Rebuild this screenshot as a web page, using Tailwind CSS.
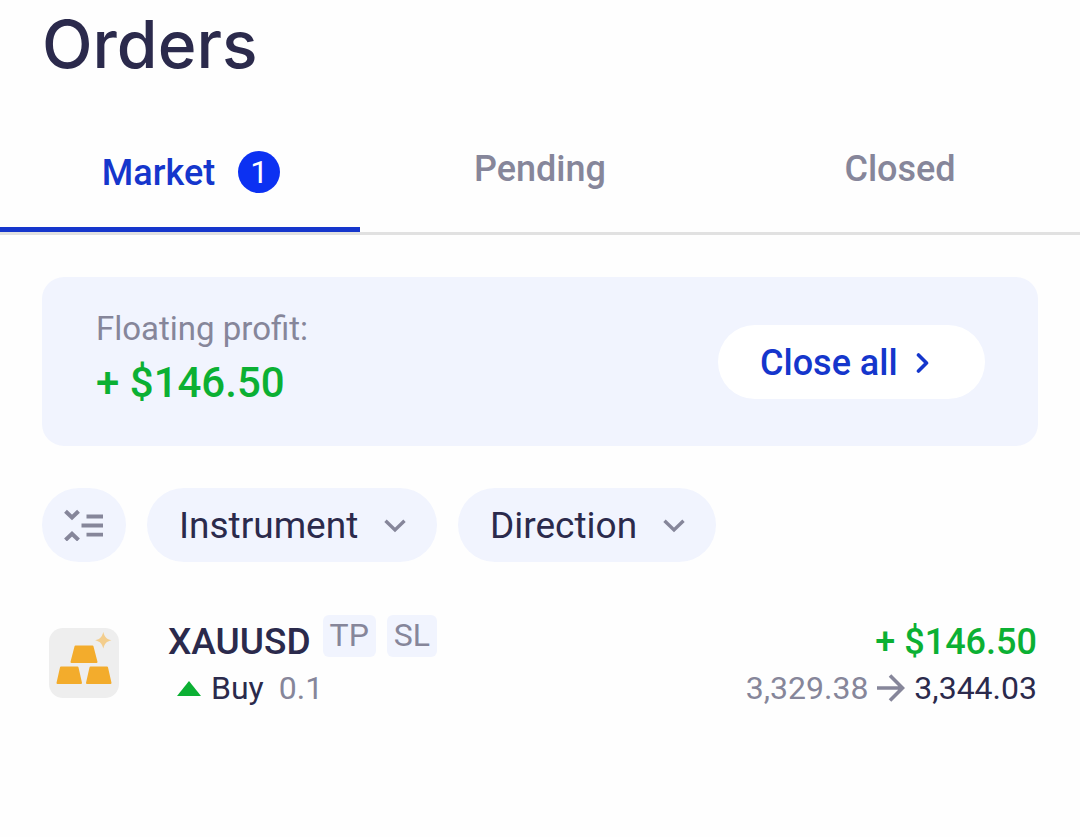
<!DOCTYPE html>
<html lang="en">
<head>
    <meta charset="UTF-8">
    <meta name="viewport" content="width=device-width, initial-scale=1.0">
    <title>Orders</title>
    <script src="https://cdn.jsdelivr.net/npm/@tailwindcss/browser@4"></script>
</head>
<body class="bg-[#fefefe] text-[#2b2a4c] font-['Roboto',sans-serif] min-h-screen">

    <h1 class="px-[42px] font-['Inter',sans-serif] text-[66px] leading-[88px] font-medium">Orders</h1>

    <nav class="mt-[63px] grid grid-cols-3 items-stretch border-b-3 border-[#e1e1e1] text-[36px] font-medium text-[#86869a]">
        <button type="button" class="flex items-center justify-center gap-[23px] border-b-5 border-[#1536cc] pb-[34px] pl-[22px] text-[#1536cc]">
            <span class="pt-[2px] leading-[40px]">Market</span>
            <span class="flex size-[42px] items-center justify-center rounded-full bg-[#0c31f2] text-[32px] leading-[42px] font-normal text-white">1</span>
        </button>
        <button type="button" class="flex items-start justify-center leading-[36px]">Pending</button>
        <button type="button" class="flex items-start justify-center leading-[36px]">Closed</button>
    </nav>

    <main class="px-[42px]">
        <section class="mt-[42px] flex items-center justify-between rounded-[22px] bg-[#f1f4fe] pt-[29px] pb-7 pl-[54px] pr-[53px]">
            <div class="pb-1">
                <p class="text-[33px] leading-[46px] text-[#86869a]">Floating profit:</p>
                <p class="text-[42px] leading-[62px] font-medium text-[#0bb033]">+ $146.50</p>
            </div>
            <button type="button" class="flex h-[74px] w-[267px] items-center gap-[18px] rounded-full bg-white pt-[2px] pl-[42px] text-[36px] font-medium text-[#1536cc]">
                Close all
                <svg class="h-[20px] w-[13px]" viewBox="0 0 13 20" fill="none" stroke="currentColor" stroke-width="3.6" stroke-linecap="round" stroke-linejoin="round">
                    <path d="M2.500 2l8 8-8 8"/>
                </svg>
            </button>
        </section>

        <div class="mt-[42px] flex gap-[21px] text-[37px]">
            <button type="button" aria-label="Sort" class="flex h-[74px] w-[84px] items-center justify-center rounded-full bg-[#f1f4fe] text-[#86869a]">
                <svg class="h-[32px] w-[40px]" viewBox="0 0 40 32" fill="none" stroke="currentColor" stroke-width="4">
                    <path d="M1.500 2.200L8 8.500l6.500-6.300M1.500 31L8 24.700l6.500 6.300"/>
                    <path d="M22.500 7.500H39M17.500 16.500H39M22.500 25.700H39" stroke-width="3.800"/>
                </svg>
            </button>
            <label class="flex h-[74px] w-[290px] items-center justify-between rounded-full bg-[#f1f4fe] pt-[2px] pl-[32px] pr-[31px]">
                <select aria-label="Instrument" class="appearance-none bg-transparent outline-none">
                    <option>Instrument</option>
                </select>
                <svg class="h-[14px] w-[22px] text-[#86869a]" viewBox="0 0 22 14" fill="none" stroke="currentColor" stroke-width="3.400">
                    <path d="M1.500 1.800L11 11l9.500-9.200"/>
                </svg>
            </label>
            <label class="flex h-[74px] w-[258px] items-center justify-between rounded-full bg-[#f1f4fe] pt-[2px] pl-[32px] pr-[31px]">
                <select aria-label="Direction" class="appearance-none bg-transparent outline-none">
                    <option>Direction</option>
                </select>
                <svg class="h-[14px] w-[22px] text-[#86869a]" viewBox="0 0 22 14" fill="none" stroke="currentColor" stroke-width="3.400">
                    <path d="M1.500 1.800L11 11l9.500-9.200"/>
                </svg>
            </label>
        </div>

        <ul class="mt-[53px]">
            <li class="flex items-center pl-[7px] pr-px">
                <!-- gold bars -->
                <svg class="size-[70px] shrink-0" viewBox="0 0 70 70">
                    <rect width="70" height="70" rx="14" fill="#eeeeee"/>
                    <g fill="#f3ac2c" stroke="#f3ac2c" stroke-width="2" stroke-linejoin="round">
                        <path d="M26.500 18.500h17l4 15.500h-25z"/>
                        <path d="M12 39.500h16.500l3.500 15.500H8.500z"/>
                        <path d="M41.500 39.500H58L61.500 55H38z"/>
                    </g>
                    <path d="M54.300 4c1.400 5.200 3 6.900 8.200 8.300-5.200 1.400-6.800 3.100-8.200 8.300-1.400-5.200-3-6.900-8.200-8.300 5.200-1.400 6.800-3.100 8.200-8.300z" fill="#f3cd8c"/>
                </svg>
                <div class="ml-[49px] flex-1 pb-1">
                    <div class="flex items-start text-[32px] text-[#86869a]">
                        <span class="text-[37px] leading-[54px] font-medium text-[#2b2a4c]">XAUUSD</span>
                        <span class="ml-[12px] rounded-md bg-[#f1f4fe] px-[7px] pb-[2px] leading-[40px]">TP</span>
                        <span class="ml-[11px] rounded-md bg-[#f1f4fe] px-[7px] pb-[2px] leading-[40px]">SL</span>
                    </div>
                    <div class="flex items-center pl-[9px] text-[32px] leading-[38px]">
                        <svg class="h-[15px] w-[24px]" viewBox="0 0 24 15" fill="#0bb033">
                            <path d="M12 0l12 15H0z"/>
                        </svg>
                        <span class="ml-[10px]">Buy</span>
                        <span class="ml-[15px] text-[#86869a]">0.1</span>
                    </div>
                </div>
                <div class="pb-1 text-right">
                    <p class="text-[36px] leading-[54px] font-medium text-[#0bb033]">+ $146.50</p>
                    <p class="flex items-center justify-end gap-[9px] text-[32px] leading-[38px]">
                        <span class="text-[#86869a]">3,329.38</span>
                        <svg class="h-[28px] w-[28px] text-[#86869a]" viewBox="0 0 28 28" fill="none" stroke="currentColor" stroke-width="3.600">
                            <path d="M0 14h26M13 1.500L25.500 14 13 26.500"/>
                        </svg>
                        <span>3,344.03</span>
                    </p>
                </div>
            </li>
        </ul>
    </main>

</body>
</html>
